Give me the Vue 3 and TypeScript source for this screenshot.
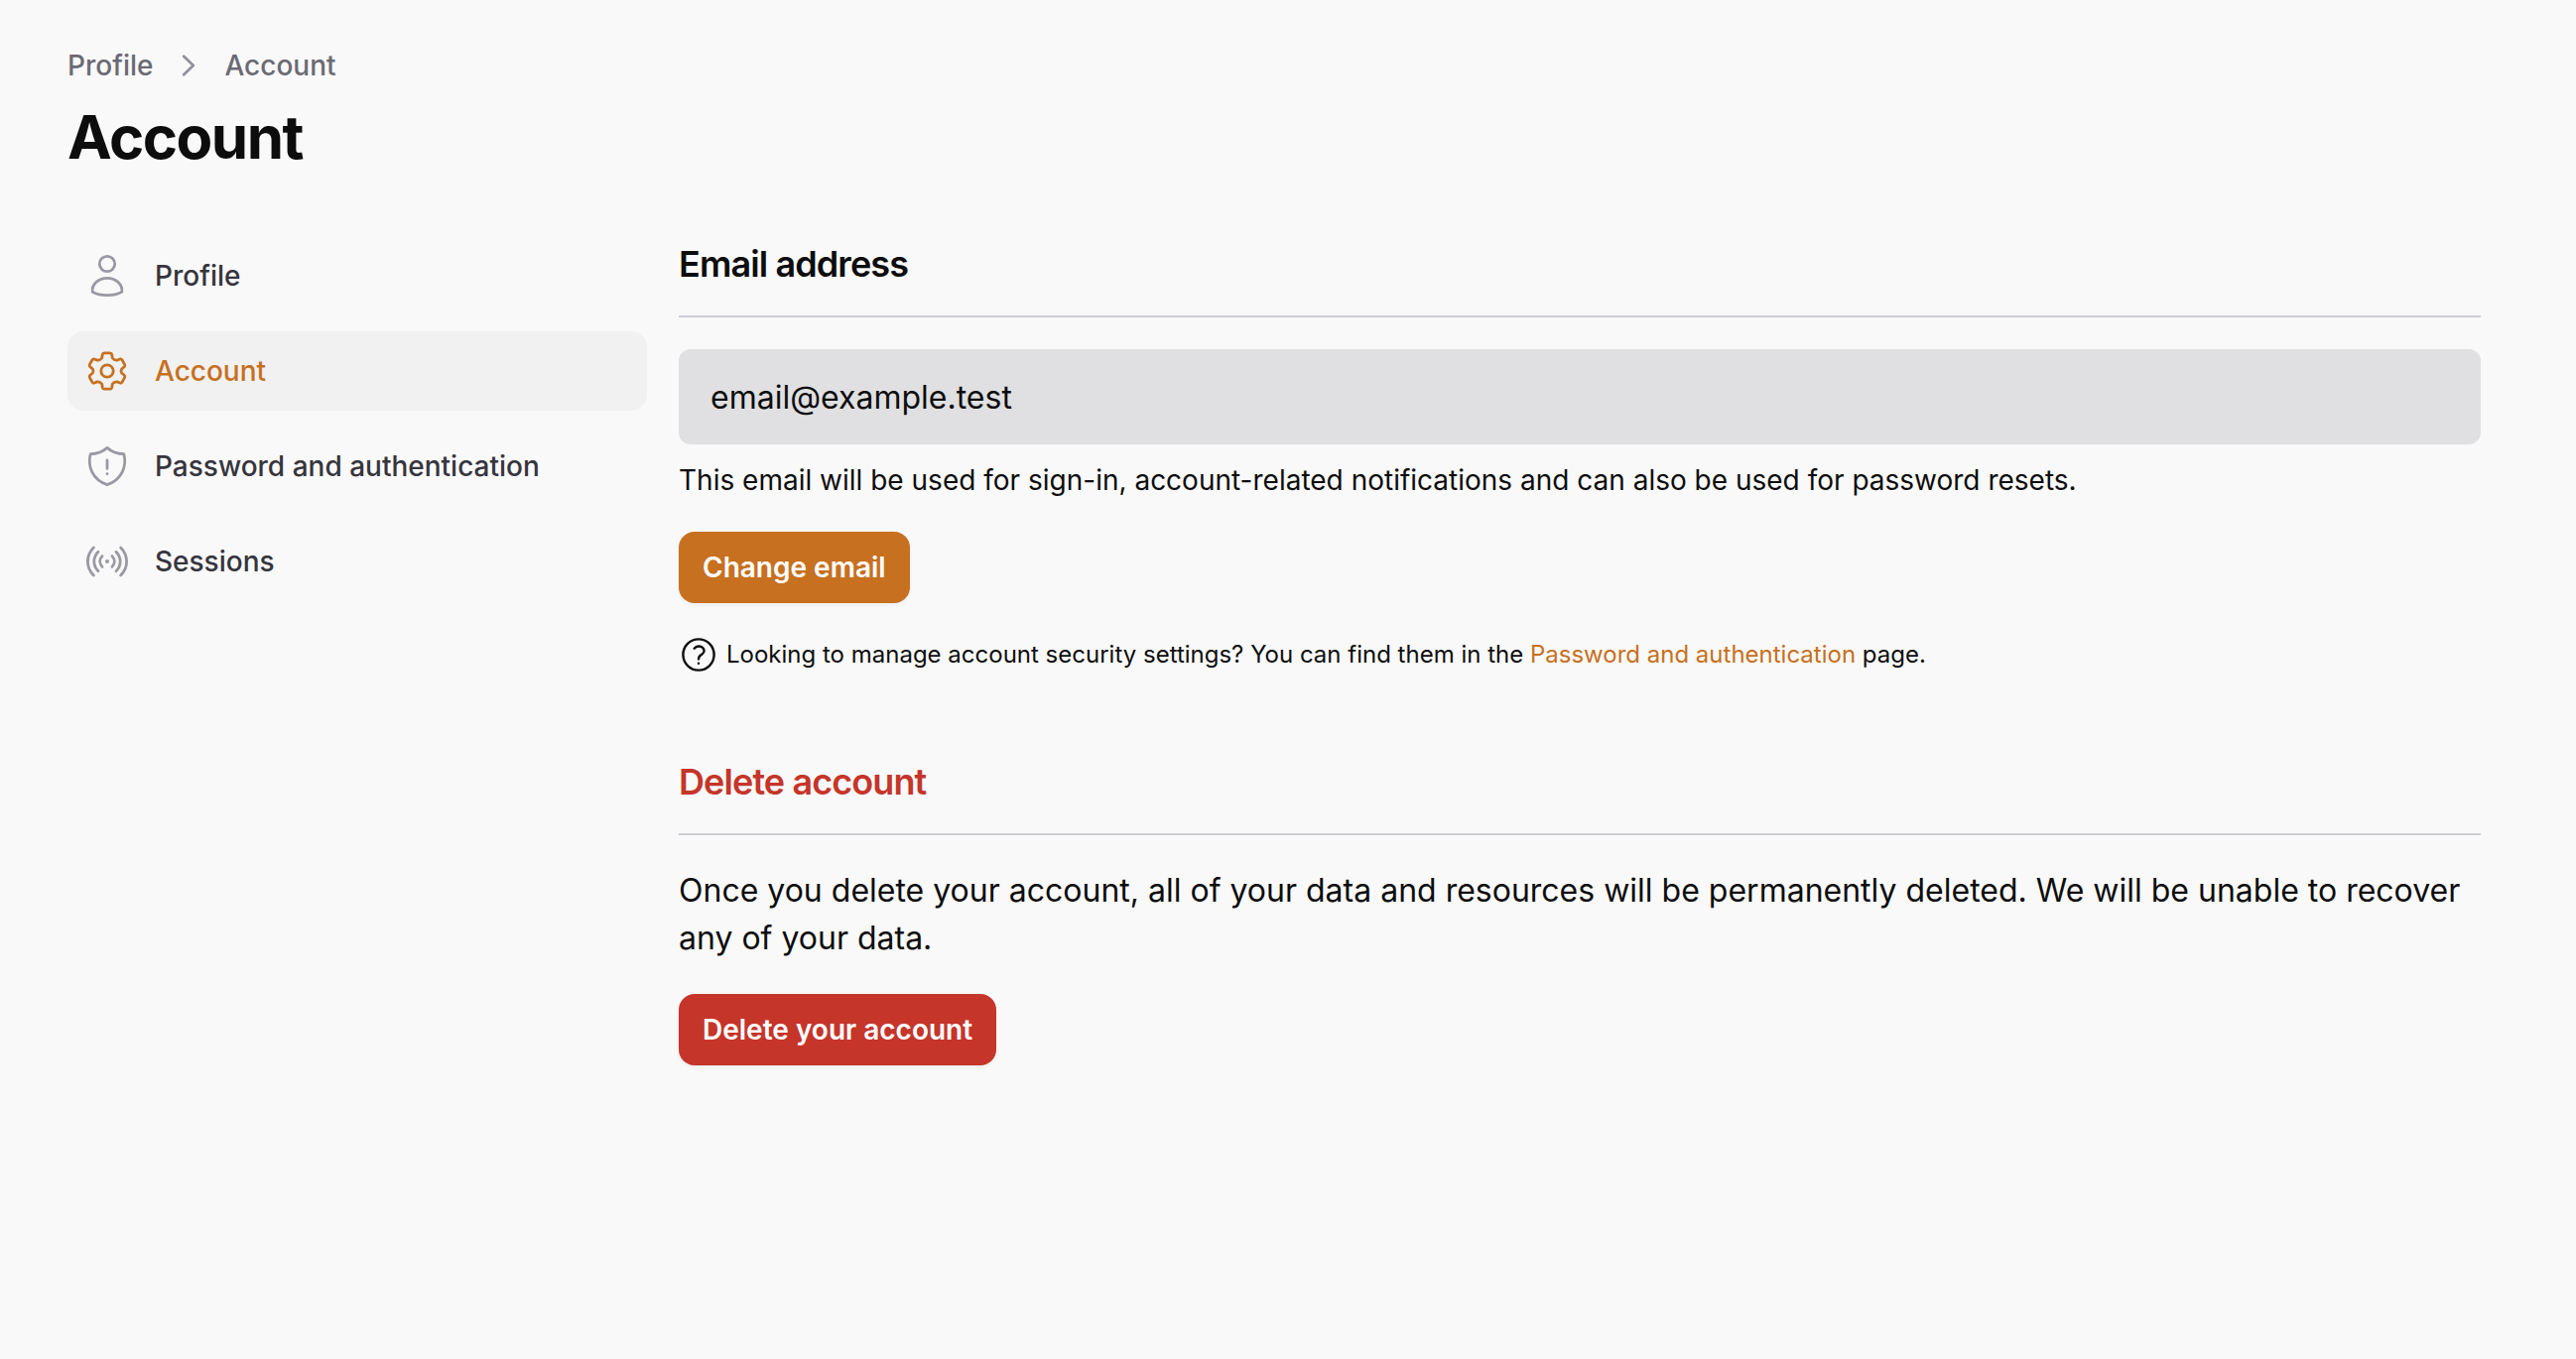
<script setup lang="ts">
import { ref } from 'vue'

interface NavItem {
  id: string
  label: string
}

const navItems: NavItem[] = [
  { id: 'profile', label: 'Profile' },
  { id: 'account', label: 'Account' },
  { id: 'security', label: 'Password and authentication' },
  { id: 'sessions', label: 'Sessions' },
]

const current = ref('account')
const email = ref('email@example.test')
</script>

<template>
  <div class="page">
    <header class="page-header">
      <nav class="breadcrumbs" aria-label="Breadcrumb">
        <a href="#profile">Profile</a>
        <svg class="chevron" viewBox="0 0 20 20" aria-hidden="true">
          <path d="M7.6 5.4 12.4 10 7.6 14.6" fill="none" stroke="currentColor" stroke-width="1.4" stroke-linecap="round" stroke-linejoin="round" />
        </svg>
        <a href="#account">Account</a>
      </nav>
      <h1>Account</h1>
    </header>

    <div class="layout">
      <nav class="side-nav" aria-label="Settings">
        <a
          v-for="item in navItems"
          :key="item.id"
          :href="`#${item.id}`"
          class="nav-item"
          :class="{ active: item.id === current }"
          @click="current = item.id"
        >
          <svg class="nav-icon" viewBox="0 0 48 48" fill="none" stroke="currentColor" stroke-width="2.8" stroke-linecap="round" stroke-linejoin="round" aria-hidden="true">
            <template v-if="item.id === 'profile'">
              <circle cx="24" cy="12" r="7.7" />
              <path d="M9.2 40.2C8.2 33 15 26.4 24 26.4S39.800 33 38.800 40.200C35 42.400 30 43.600 24 43.600S13 42.400 9.200 40.200Z" />
            </template>
            <template v-else-if="item.id === 'account'">
              <path d="M18.700 11 19.300 7.200Q19.600 5.800 21 5.800H27Q28.400 5.800 28.700 7.200L29.300 11Q31.200 13.400 34 13.100L36.800 12Q38.200 11.600 39 12.800L41.600 17.400Q42.200 18.700 41.200 19.700L38.600 22Q37.400 24 38.600 26L41.200 28.300Q42.200 29.300 41.600 30.600L39 35.200Q38.200 36.400 36.800 36L34 34.900Q31.200 34.600 29.300 37L28.700 40.800Q28.400 42.200 27 42.200H21Q19.600 42.200 19.300 40.800L18.700 37Q16.800 34.600 14 34.900L11.200 36Q9.800 36.400 9 35.200L6.400 30.600Q5.800 29.300 6.800 28.300L9.400 26Q10.600 24 9.400 22L6.800 19.700Q5.800 18.700 6.400 17.400L9 12.800Q9.800 11.600 11.200 12L14 13.100Q16.800 13.400 18.700 11Z" />
              <circle cx="24" cy="24" r="6.200" />
            </template>
            <template v-else-if="item.id === 'security'">
              <path d="M24 5.400C19.500 9.500 14 11.600 7.200 11.700C4 24 9 37.500 24 42.600C39 37.500 44 24 40.800 11.700C34 11.600 28.500 9.500 24 5.400Z" />
              <path d="M24 18V26.400M24 31.600V31.700" />
            </template>
            <template v-else>
              <path d="M10.400 10C2.400 18 2.400 30 10.400 38M15 14.200C9.400 20 9.400 28 15 33.800M19 18.600C16 21.800 16 26.200 19 29.400M29 18.600C32 21.800 32 26.200 29 29.400M33 14.200C38.600 20 38.600 28 33 33.800M37.600 10C45.600 18 45.600 30 37.600 38" />
              <circle cx="24" cy="24" r="2" fill="currentColor" stroke="none" />
            </template>
          </svg>
          <span>{{ item.label }}</span>
        </a>
      </nav>

      <main class="content">
        <section>
          <h2><label for="email">Email address</label></h2>
          <input id="email" v-model="email" class="field" type="email" readonly aria-describedby="email-hint" />
          <p id="email-hint" class="hint">
            This email will be used for sign-in, account-related notifications and can also be used for password resets.
          </p>
          <button type="button" class="btn primary">Change email</button>
          <div class="help">
            <svg class="help-icon" viewBox="0 0 40 40" fill="none" stroke="currentColor" stroke-width="2.400" stroke-linecap="round" aria-hidden="true">
              <circle cx="20" cy="20" r="15.600" />
              <path d="M15.600 13.700C18 10.900 22 10.900 24.100 12.900C26.300 15 26 17.600 23.600 19.400C21.300 21 20 21.600 20 24.400M20 28.600V28.700" />
            </svg>
            <p>
              Looking to manage account security settings? You can find them in the
              <a href="#security">Password and authentication</a> page.
            </p>
          </div>
        </section>

        <section>
          <h2 class="danger-title">Delete account</h2>
          <p class="body">
            Once you delete your account, all of your data and resources will be permanently deleted. We will be unable to
            recover any of your data.
          </p>
          <button type="button" class="btn danger">Delete your account</button>
        </section>
      </main>
    </div>
  </div>
</template>

<style>
body {
  background: #f9f9f9;
}
</style>

<style scoped>
.page {
  box-sizing: border-box;
  padding: 46px 96px 64px 68px;
  font-family: Inter, "Liberation Sans", sans-serif;
  font-size: 32px;
  line-height: 48px;
  color: #0d0d0d;
}

h1,
h2,
p {
  margin: 0;
}

a {
  color: inherit;
  text-decoration: none;
}

.page-header {
  margin-bottom: 64px;
}

.breadcrumbs {
  display: flex;
  align-items: center;
  gap: 16px;
  font-size: 28px;
  line-height: 40px;
  font-weight: 500;
  color: #6b6a74;
}

.chevron {
  width: 40px;
  height: 40px;
  color: #92919b;
}

h1 {
  margin-top: 16px;
  font-size: 60px;
  line-height: 72px;
  font-weight: 700;
  letter-spacing: -0.025em;
}

.layout {
  display: grid;
  grid-template-columns: minmax(0, 584fr) minmax(0, 1816fr);
  gap: 32px;
  align-items: start;
}

.side-nav {
  display: flex;
  flex-direction: column;
  gap: 16px;
}

.nav-item {
  display: flex;
  align-items: center;
  gap: 24px;
  padding: 16px;
  border-radius: 16px;
  font-size: 28px;
  line-height: 48px;
  font-weight: 500;
  color: #36353c;
}

.nav-icon {
  width: 48px;
  height: 48px;
  flex: none;
  color: #9a99a3;
}

.nav-item.active {
  background: #f1f1f1;
  color: #c77020;
}

.nav-item.active .nav-icon {
  color: inherit;
}

.content {
  display: flex;
  flex-direction: column;
  gap: 80px;
}

h2 {
  margin-bottom: 32px;
  padding-bottom: 24px;
  border-bottom: 2px solid #cfced5;
  font-size: 36px;
  line-height: 56px;
  font-weight: 600;
  letter-spacing: -0.025em;
}

.danger-title {
  color: #c5352a;
  border-color: #cdced2;
}

.field {
  display: block;
  box-sizing: border-box;
  width: 100%;
  height: 96px;
  padding: 0 32px;
  border: 0;
  border-radius: 12px;
  background: #e0e0e2;
  color: inherit;
  font: inherit;
  outline: none;
}

.hint {
  margin: 16px 0 32px;
  font-size: 28px;
  line-height: 40px;
}

.btn {
  display: block;
  height: 72px;
  padding: 0 24px;
  border: 0;
  border-radius: 16px;
  box-shadow: 0 2px 4px rgba(0, 0, 0, 0.05);
  color: #fff;
  font-family: inherit;
  font-size: 28px;
  line-height: 40px;
  font-weight: 600;
  cursor: pointer;
}

.primary {
  background: #c77020;
}

.danger {
  background: #c5352a;
}

.help {
  display: flex;
  align-items: center;
  gap: 8px;
  margin-top: 32px;
  font-size: 24px;
  line-height: 40px;
}

.help-icon {
  width: 40px;
  height: 40px;
  flex: none;
}

.help a {
  color: #c77020;
}

.body {
  margin-bottom: 32px;
}
</style>
